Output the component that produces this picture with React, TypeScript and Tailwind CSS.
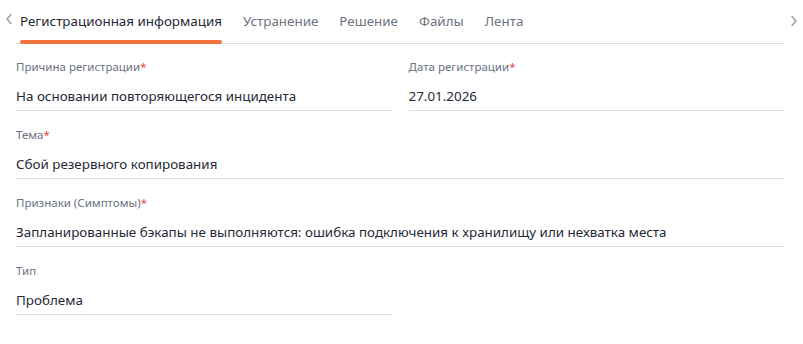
import React from 'react';

const tabs = ['Регистрационная информация', 'Устранение', 'Решение', 'Файлы', 'Лента'];

const Field: React.FC<{ label: string; value: string; required?: boolean; className?: string }> = ({
  label,
  value,
  required,
  className = '',
}) => (
  <div className={`flex flex-col ${className}`}>
    <div className="text-[11.5px] leading-4 text-[#6b7280]">
      {label}
      {required && <span className="text-[#ef4444]">*</span>}
    </div>
    <div className="mt-[11px] border-b border-[#dcdde3] pb-[4px] text-[13.4px] leading-5 text-[#1f2937]">{value}</div>
  </div>
);

const Chevron: React.FC<{ dir: 'left' | 'right' }> = ({ dir }) => (
  <svg width="8" height="12" viewBox="0 0 8 12" fill="none" className="text-[#9ca3af]">
    <path
      d={dir === 'left' ? 'M6 1.5 2 6l4 4.5' : 'M2 1.5 6 6l-4 4.5'}
      stroke="currentColor"
      strokeWidth="1.6"
      strokeLinecap="round"
      strokeLinejoin="round"
    />
  </svg>
);

export default function App() {
  return (
    <div className="h-[344px] w-[803px] bg-white" style={{ fontFamily: '"Noto Sans", "Open Sans", sans-serif' }}>
      <div className="flex items-start">
        <button className="flex h-[38px] w-[16px] items-center justify-center pl-[1px]">
          <Chevron dir="left" />
        </button>
        <div className="flex flex-1 flex-col">
          <div className="flex items-end gap-[21px] pl-[4px] pt-[11px]">
            {tabs.map((t, i) => (
              <div key={t} className="relative flex flex-col">
                <span className={`text-[13.4px] leading-5 ${i === 0 ? 'text-[#1f2937]' : 'text-[#6b7280]'}`}>{t}</span>
                <span className={`mt-[9px] h-[4px] rounded-full ${i === 0 ? 'bg-[#f4733f]' : 'bg-transparent'}`} />
              </div>
            ))}
          </div>
          <div className="-mt-[1px] h-px w-full bg-[#dcdde3]" />
        </div>
        <button className="flex h-[40px] w-[19px] items-center justify-center pt-[1px]">
          <Chevron dir="right" />
        </button>
      </div>

      <div className="flex flex-col gap-[16px] pl-[16px] pr-[19px] pt-[15px]">
        <div className="grid grid-cols-2 gap-[17px]">
          <Field label="Причина регистрации" value="На основании повторяющегося инцидента" required />
          <Field label="Дата регистрации" value="27.01.2026" required />
        </div>
        <Field label="Тема" value="Сбой резервного копирования" required />
        <Field
          label="Признаки (Симптомы)"
          value="Запланированные бэкапы не выполняются: ошибка подключения к хранилищу или нехватка места"
          required
        />
        <div className="grid grid-cols-2 gap-[17px]">
          <Field label="Тип" value="Проблема" />
        </div>
      </div>
    </div>
  );
}
